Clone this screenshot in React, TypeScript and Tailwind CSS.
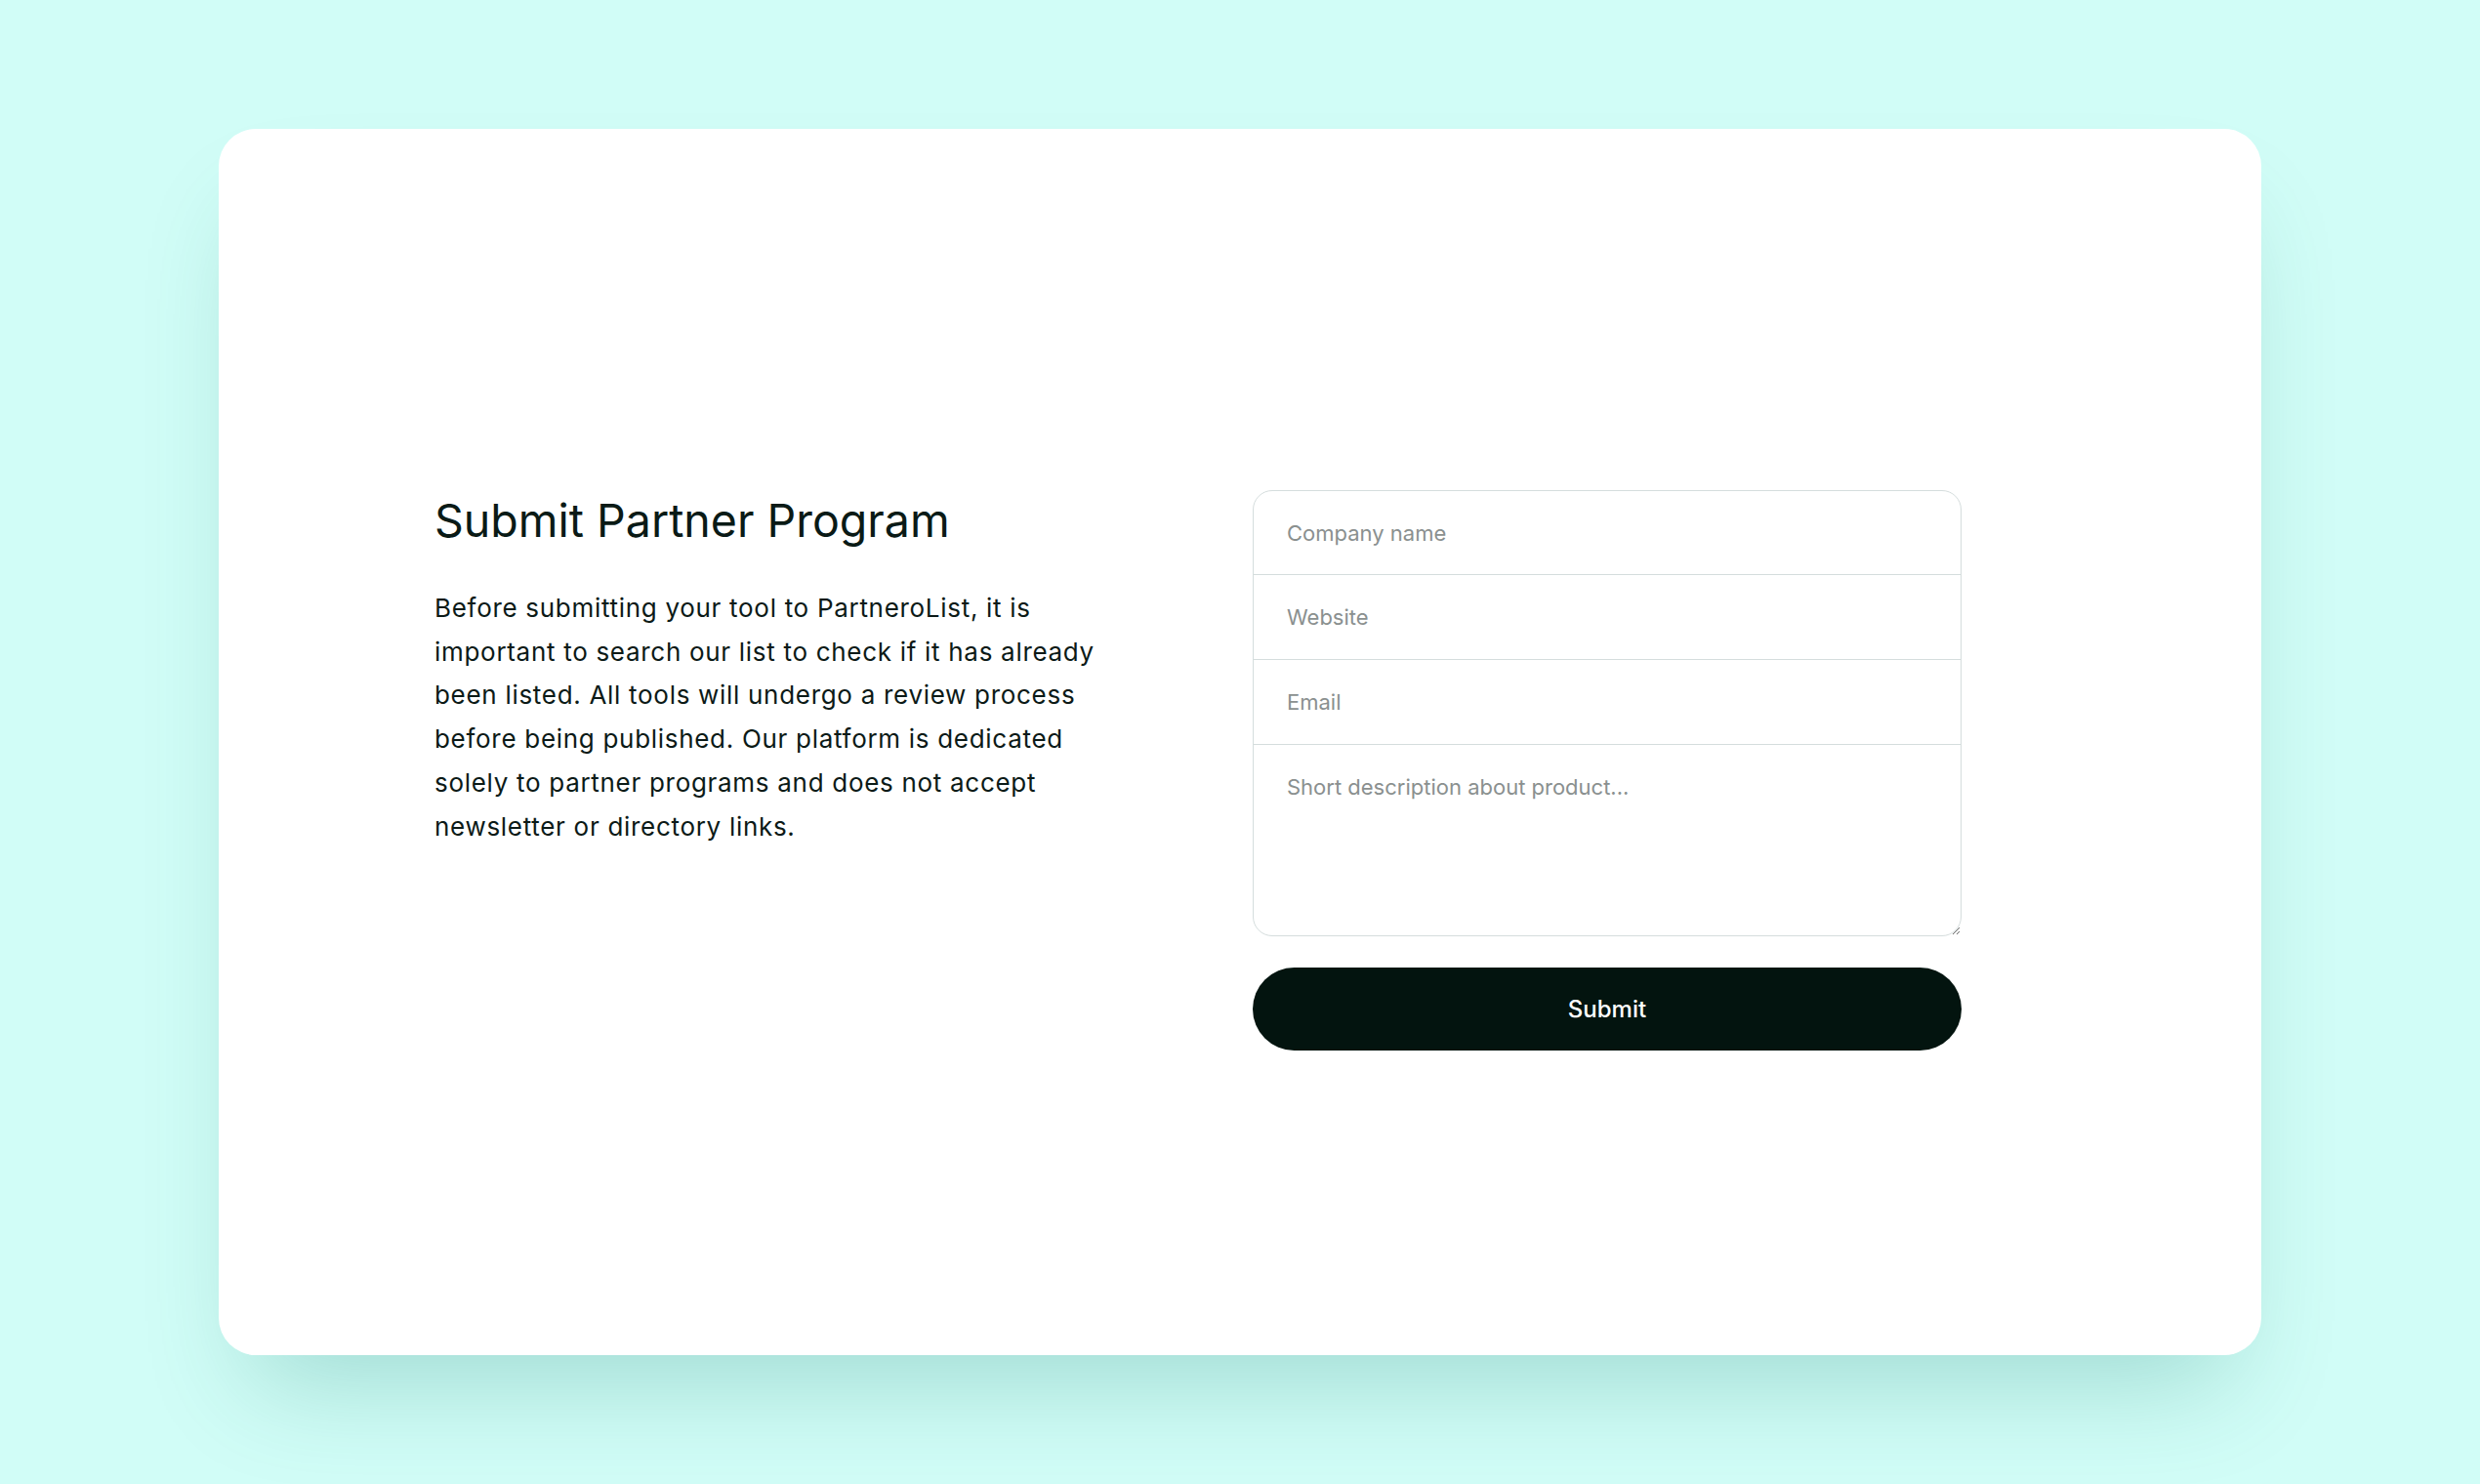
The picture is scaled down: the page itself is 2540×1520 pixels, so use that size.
import React, { useState } from "react";

export default function App() {
  const [form, setForm] = useState({
    company: "",
    website: "",
    email: "",
    description: "",
  });

  const handleChange = (
    e: React.ChangeEvent<HTMLInputElement | HTMLTextAreaElement>
  ) => {
    setForm({ ...form, [e.target.name]: e.target.value });
  };

  const handleSubmit = (e: React.FormEvent) => {
    e.preventDefault();
  };

  return (
    <div
      className="min-h-screen w-full bg-[#d1fdf7] px-[224px] pt-[132px] pb-[132px]"
      style={{ fontFamily: "Inter, 'Noto Sans', sans-serif" }}
    >
      <div className="h-[1256px] w-full rounded-[38px] bg-white shadow-[0_60px_110px_-34px_rgba(0,110,90,0.24)] pt-[370px] pl-[221px]">
        <div className="flex items-start">
          <div className="w-[838px] shrink-0">
            <h1 className="mt-[3px] text-[46.5px] font-normal leading-[56px] text-[#0a1a16]">
              Submit Partner Program
            </h1>
            <p className="mt-[40px] w-[700px] text-[26px] leading-[44.7px] tracking-[0.7px] text-[#0c1a17]">
              Before submitting your tool to PartneroList, it is important to
              search our list to check if it has already been listed. All tools
              will undergo a review process before being published. Our platform
              is dedicated solely to partner programs and does not accept
              newsletter or directory links.
            </p>
          </div>

          <form onSubmit={handleSubmit} className="flex w-[726px] flex-col">
            <div className="flex flex-col rounded-[20px] border border-[#d5dddd]">
              <input
                name="company"
                value={form.company}
                onChange={handleChange}
                placeholder="Company name"
                className="h-[86px] rounded-t-[19px] border-b border-[#d5dddd] px-[34px] text-[22px] text-[#0c1a17] outline-none placeholder:text-[#8a908f]"
              />
              <input
                name="website"
                value={form.website}
                onChange={handleChange}
                placeholder="Website"
                className="h-[87px] border-b border-[#d5dddd] px-[34px] text-[22px] text-[#0c1a17] outline-none placeholder:text-[#8a908f]"
              />
              <input
                name="email"
                value={form.email}
                onChange={handleChange}
                placeholder="Email"
                className="h-[87px] border-b border-[#d5dddd] px-[34px] text-[22px] text-[#0c1a17] outline-none placeholder:text-[#8a908f]"
              />
              <textarea
                name="description"
                value={form.description}
                onChange={handleChange}
                placeholder="Short description about product..."
                className="h-[195px] resize-y rounded-b-[19px] px-[34px] py-[27px] text-[22px] leading-[33px] text-[#0c1a17] outline-none placeholder:text-[#8a908f]"
              />
            </div>
            <button
              type="submit"
              className="mt-[32px] h-[85px] w-full rounded-full bg-[#03140f] text-[24px] font-medium text-white"
            >
              Submit
            </button>
          </form>
        </div>
      </div>
    </div>
  );
}
